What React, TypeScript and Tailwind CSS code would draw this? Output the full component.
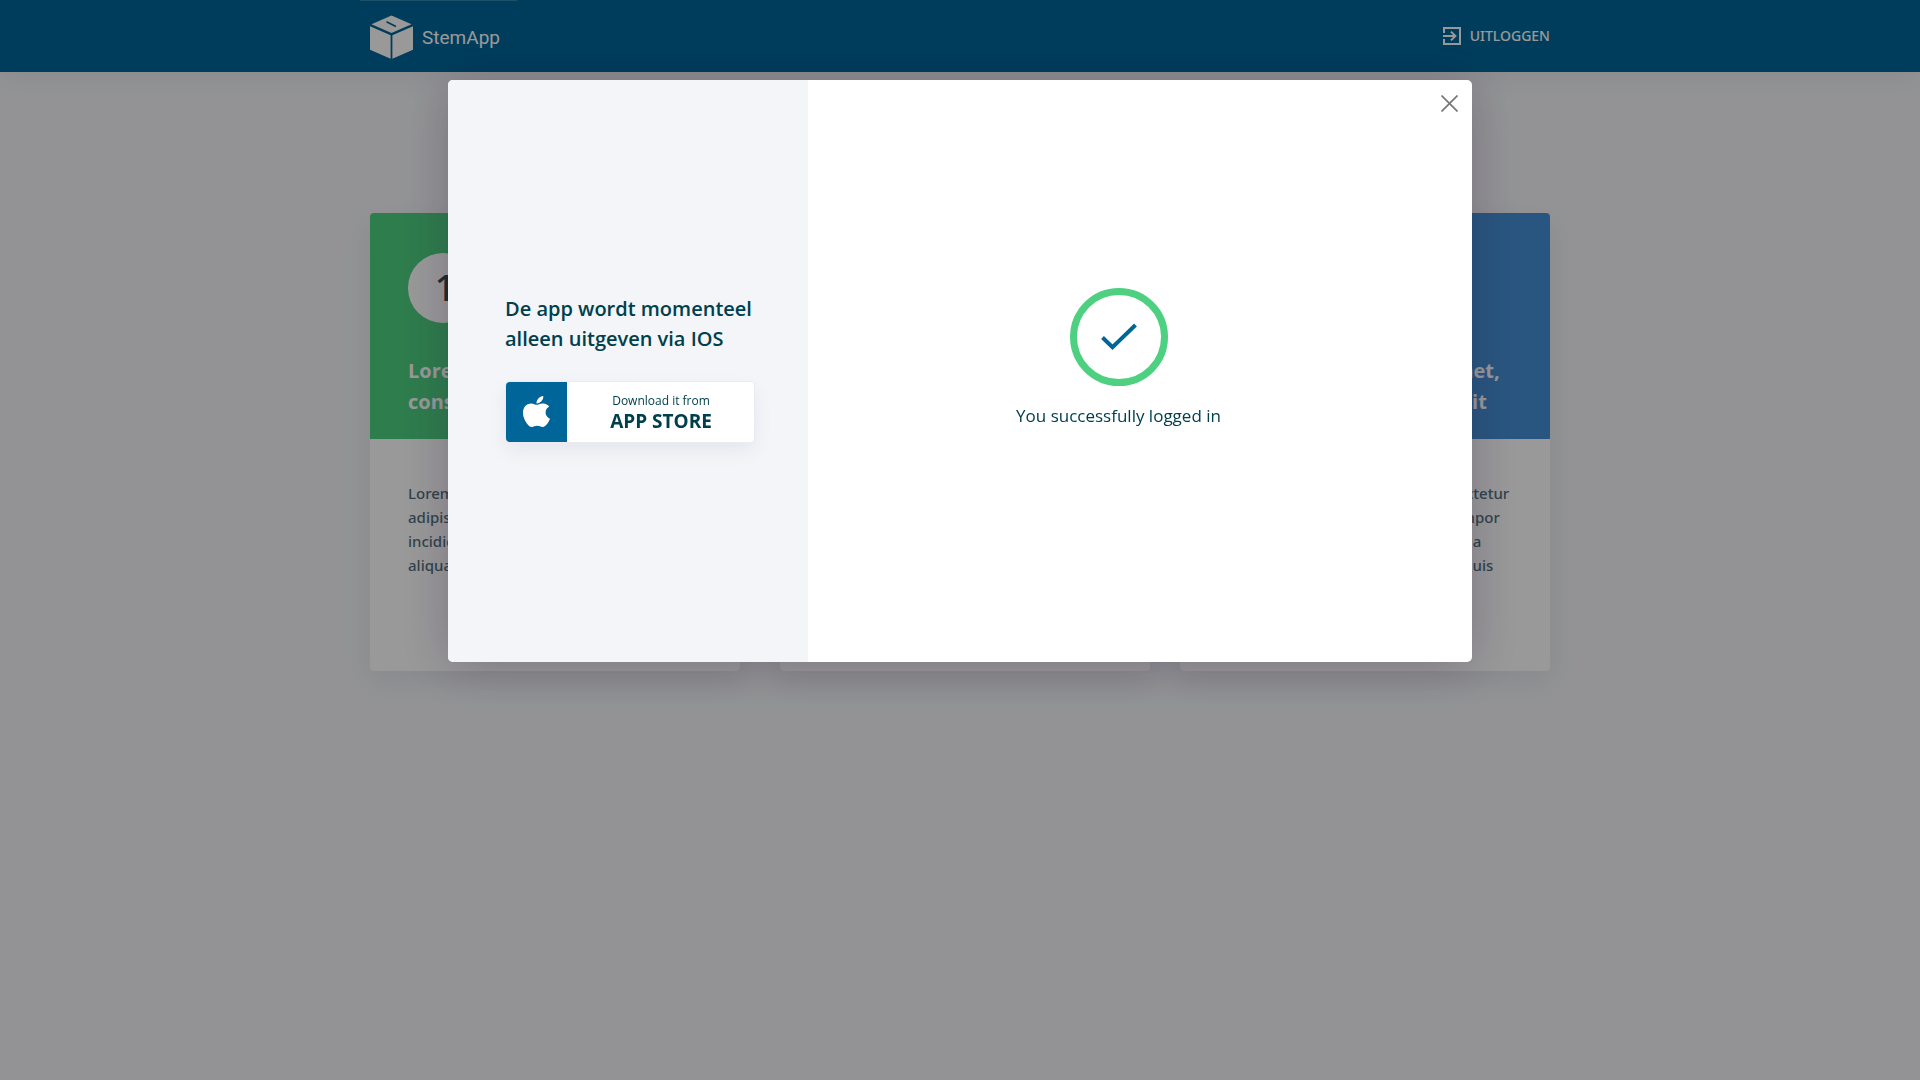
import type { ReactNode } from "react";

function LogoMark() {
  return (
    <svg width="43" height="44" viewBox="0 0 43 44" fill="#ffffff" aria-hidden="true">
      <path d="M21.5 0.5 41.5 9.3 21.5 18 1.5 9.3Z" />
      <path d="M16.5 6.7 26 11.5" stroke="#006699" strokeWidth="1.8" />
      <path d="M0 11.3 20.6 20.3V43.8L0 34.8Z" />
      <path d="M43 11.3 22.4 20.3V43.8L43 34.8Z" />
    </svg>
  );
}

function LogoutIcon() {
  return (
    <svg width="18" height="18" viewBox="0 0 18 18" fill="none" stroke="#ffffff" strokeWidth="2" aria-hidden="true">
      <path d="M1 6V1h16v16H1v-5" />
      <path d="M0 9h12M8 4.6 12.4 9 8 13.4" />
    </svg>
  );
}

function AppleIcon() {
  return (
    <svg width="27" height="31" viewBox="4 32 376 448" preserveAspectRatio="none" fill="#ffffff" aria-hidden="true">
      <path d="M318.7 268.7c-.2-36.7 16.4-64.4 50-84.8-18.8-26.9-47.2-41.7-84.7-44.6-35.5-2.8-74.3 20.7-88.5 20.7-15 0-49.4-19.7-76.4-19.7C63.3 141.2 4 184.8 4 273.5q0 39.3 14.4 81.2c12.8 36.7 59 126.7 107.2 125.2 25.2-.6 43-17.9 75.8-17.9 31.8 0 48.3 17.9 76.4 17.9 48.6-.7 90.4-82.5 102.6-119.3-65.2-30.7-61.7-90-61.7-91.9zm-56.6-164.2c27.3-32.4 24.8-61.9 24-72.5-24.1 1.4-52 16.4-67.9 34.9-17.5 19.8-27.8 44.3-25.6 71.9 26.1 2 49.9-11.4 69.5-34.3z" />
    </svg>
  );
}

type CardProps = { step: number; tone: string; title: string; children: ReactNode };

function Card({ step, tone, title, children }: CardProps) {
  return (
    <article className="flex flex-col rounded-sm bg-white shadow-[0_10px_30px_rgba(0,20,50,0.08)]">
      <header className={`rounded-t-sm px-[38px] pt-10 pb-[22px] ${tone}`}>
        <div className="flex size-[70px] items-center justify-center rounded-full bg-white pl-1 font-['Noto_Sans',sans-serif] text-4xl font-medium text-[#37474f]">
          {step}
        </div>
        <h2 className="mt-8 text-xl leading-[31px] font-bold text-white">{title}</h2>
      </header>
      <p className="px-[38px] pt-[42px] pb-[94px] font-['Noto_Sans',sans-serif] text-[15px] leading-6 font-medium text-[#53707c]">
        {children}
      </p>
    </article>
  );
}

const body =
  "Lorem ipsum dolor sit amet, consectetur adipisicing elit, sed do eiusmod tempor incididunt ut labore et dolore magna aliqua. Ut enim ad minim veniam, quis";
const title = "Lorem ipsum dolor sit amet, consectetur adipisicing elit";

export default function App() {
  return (
    <div className="min-h-screen bg-[#f5f6f9] font-['Open_Sans',sans-serif]">
      <header className="h-18 bg-[#006699] shadow-[0_2px_30px_rgba(0,20,50,0.08)]">
        <div className="mx-auto flex h-full max-w-[1180px] items-center justify-between">
          <a
            href="#"
            className="-ml-[10px] flex h-full w-[157px] items-center gap-[9px] border-t border-[#3385ad] pl-[10px] font-['Roboto',sans-serif] text-[19px] text-white"
          >
            <LogoMark />
            <span className="pt-1">StemApp</span>
          </a>
          <button
            type="button"
            className="flex items-center gap-[9px] font-['Noto_Sans',sans-serif] text-sm font-medium text-white"
          >
            <LogoutIcon />
            UITLOGGEN
          </button>
        </div>
      </header>

      <main className="mx-auto flex max-w-[1180px] pt-[141px]">
        <div className="mr-10 flex-1">
          <Card step={1} tone="bg-[#4dd080]" title={title}>{body}</Card>
        </div>
        <div className="mr-[30px] flex-1">
          <Card step={2} tone="bg-[#006699]" title={title}>{body}</Card>
        </div>
        <div className="flex-1">
          <Card step={3} tone="bg-[#4590d5]" title={title}>{body}</Card>
        </div>
      </main>

      <div className="fixed inset-0 flex items-start justify-center bg-black/40 pt-20">
        <section
          role="dialog"
          aria-modal="true"
          aria-label="You successfully logged in"
          className="relative flex min-h-[582px] w-full max-w-5xl overflow-hidden rounded-[5px] bg-white shadow-[0_4px_50px_rgba(30,10,50,0.25)]"
        >
          <aside className="flex w-[360px] flex-col justify-center bg-[#f3f5f9] pr-[53px] pb-[6px] pl-[57px] text-[#00404d]">
            <h2 className="text-xl leading-[30px] font-semibold">
              De app wordt momenteel alleen uitgeven via IOS
            </h2>
            <a
              href="#"
              className="mt-[27px] flex h-[62px] rounded-sm border border-[#ebecef] bg-white shadow-[0_8px_20px_rgba(0,20,50,0.06)]"
            >
              <span className="flex w-[61px] shrink-0 items-center justify-center rounded-l-sm bg-[#006699]">
                <AppleIcon />
              </span>
              <span className="flex flex-1 flex-col items-center justify-center pt-[2px] pl-px">
                <span className="text-xs leading-4">Download it from</span>
                <span className="text-[19px] leading-6 font-bold">APP STORE</span>
              </span>
            </a>
          </aside>
          <div className="flex flex-1 flex-col items-center justify-center pr-[43px] pb-6 text-[#00404d]">
            <div className="flex size-[98px] items-center justify-center rounded-full border-[7px] border-[#4dd080]">
              <svg width="36" height="28" viewBox="0 0 36 28" fill="none" stroke="#006699" strokeWidth="4" aria-hidden="true">
                <path d="M1.5 14.5 11.5 24.2 34.5 2" />
              </svg>
            </div>
            <p className="mt-4 text-[17px] leading-7">You successfully logged in</p>
          </div>
          <button type="button" aria-label="Close" className="absolute top-[15px] right-[14px]">
            <svg width="17" height="17" viewBox="0 0 17 17" stroke="#777777" strokeWidth="1.7" aria-hidden="true">
              <path d="m.5.5 16 16m0-16-16 16" />
            </svg>
          </button>
        </section>
      </div>
    </div>
  );
}
